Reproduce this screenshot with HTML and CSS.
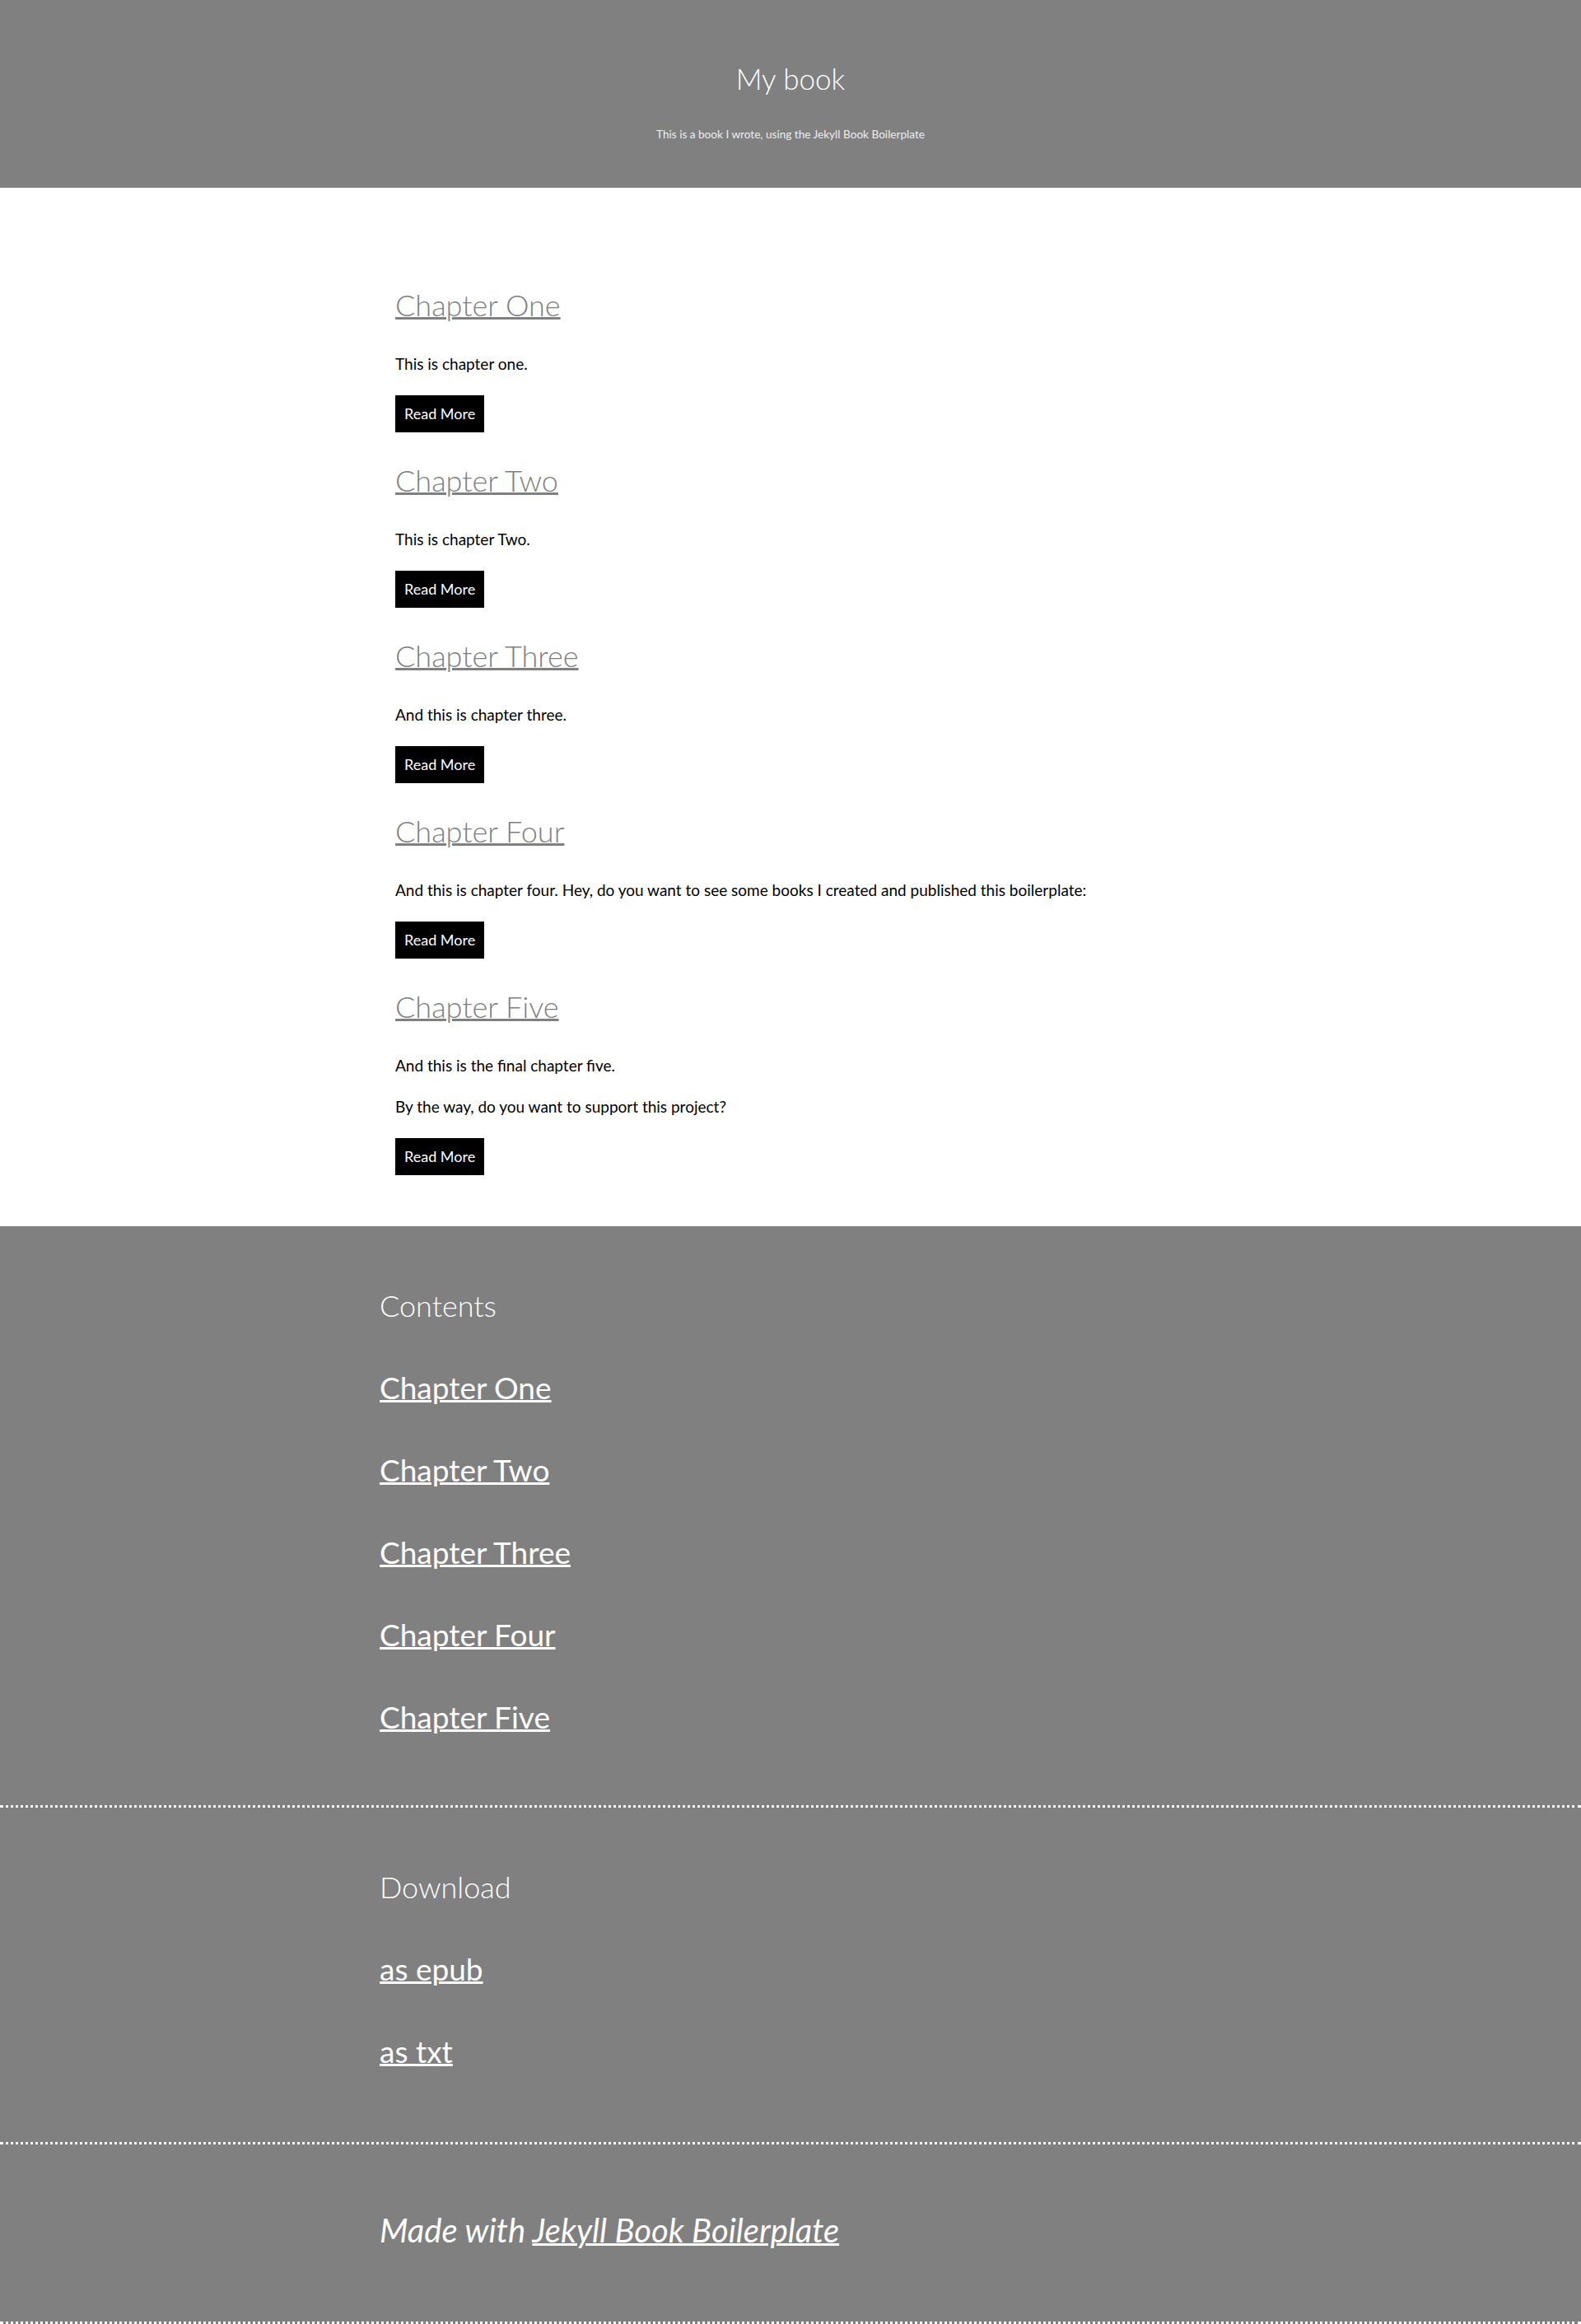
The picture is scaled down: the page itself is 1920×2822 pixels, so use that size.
FILE: index.html
```html
<!DOCTYPE html>
<html lang="en">
<head>
<meta charset="utf-8">
<title>My book</title>
<link rel="stylesheet" href="styles.css">
</head>
<body>
<header class="site-header">
  <h1 class="site-title">My book</h1>
  <p class="site-desc">This is a book I wrote, using the Jekyll Book Boilerplate</p>
</header>

<main class="chapters">
  <article class="chapter">
    <h2 class="chapter-title"><a href="#">Chapter One</a></h2>
    <p class="chapter-text">This is chapter one.</p>
    <a class="btn" href="#">Read More</a>
  </article>
  <article class="chapter">
    <h2 class="chapter-title"><a href="#">Chapter Two</a></h2>
    <p class="chapter-text">This is chapter Two.</p>
    <a class="btn" href="#">Read More</a>
  </article>
  <article class="chapter">
    <h2 class="chapter-title"><a href="#">Chapter Three</a></h2>
    <p class="chapter-text">And this is chapter three.</p>
    <a class="btn" href="#">Read More</a>
  </article>
  <article class="chapter">
    <h2 class="chapter-title"><a href="#">Chapter Four</a></h2>
    <p class="chapter-text">And this is chapter four. Hey, do you want to see some books I created and published this boilerplate:</p>
    <a class="btn" href="#">Read More</a>
  </article>
  <article class="chapter">
    <h2 class="chapter-title"><a href="#">Chapter Five</a></h2>
    <p class="chapter-text">And this is the final chapter five.</p>
    <p class="chapter-text">By the way, do you want to support this project?</p>
    <a class="btn" href="#">Read More</a>
  </article>
</main>

<footer class="site-footer">
  <section class="footer-block footer-contents">
    <div class="footer-inner">
      <h2 class="footer-heading">Contents</h2>
      <ul class="footer-list">
        <li><a href="#">Chapter One</a></li>
        <li><a href="#">Chapter Two</a></li>
        <li><a href="#">Chapter Three</a></li>
        <li><a href="#">Chapter Four</a></li>
        <li><a href="#">Chapter Five</a></li>
      </ul>
    </div>
  </section>
  <section class="footer-block footer-download">
    <div class="footer-inner">
      <h2 class="footer-heading">Download</h2>
      <ul class="footer-list">
        <li><a href="#">as epub</a></li>
        <li><a href="#">as txt</a></li>
      </ul>
    </div>
  </section>
  <section class="footer-block footer-credit">
    <div class="footer-inner">
      <p class="made-with">Made with <a href="#">Jekyll Book Boilerplate</a></p>
    </div>
  </section>
</footer>
</body>
</html>
```
FILE: styles.css
```css
* { box-sizing: border-box; }

html, body {
  margin: 0;
  padding: 0;
}

body {
  font-family: "Lato", "Liberation Sans", sans-serif;
  color: #000;
  background: #fff;
}

/* Header */
.site-header {
  background: #808080;
  color: #fff;
  text-align: center;
  height: 228px;
  padding-top: 74px;
}

.site-title {
  margin: 0;
  font-size: 35px;
  font-weight: 300;
  line-height: 42px;
}

.site-desc {
  margin: 37px 0 0;
  font-size: 13.6px;
  line-height: 20px;
  font-weight: 400;
  color: #eeeeee;
}

/* Chapters */
.chapters {
  width: 960px;
  margin: 0 auto;
  padding: 118px 0 62px;
}

.chapter {
  display: flex;
  flex-direction: column;
  align-items: flex-start;
}

.chapter + .chapter {
  margin-top: 34px;
}

.chapter-title {
  margin: 0;
  font-size: 36px;
  font-weight: 300;
  line-height: 48px;
}

.chapter-title a {
  color: #808080;
  text-decoration: underline;
  text-decoration-thickness: 3px;
  text-underline-offset: 1px;
}

.chapter-text {
  margin: 20px 0 0;
  font-size: 19px;
  line-height: 30px;
}

.chapter-title + .chapter-text {
  margin-top: 33px;
}

.btn {
  margin-top: 23px;
  display: inline-block;
  background: #000;
  color: #fff;
  text-decoration: none;
  font-size: 18px;
  line-height: 27px;
  padding: 9px 11px;
}

/* Footer */
.site-footer {
  background: #808080;
  color: #fff;
}

.footer-block {
  border-bottom: 3px dotted #fff;
}

.footer-inner {
  width: 998px;
  margin: 0 auto;
}

.footer-contents .footer-inner {
  padding: 72px 0 83px;
}

.footer-download .footer-inner {
  padding: 72px 0 86px;
}

.footer-credit .footer-inner {
  padding: 80px 0 87px;
}

.footer-heading {
  margin: 0;
  font-size: 36px;
  font-weight: 300;
  line-height: 48px;
}

.footer-list {
  list-style: none;
  margin: 0;
  padding: 0;
}

.footer-list li {
  margin-top: 52px;
  font-size: 37px;
  line-height: 48px;
}

.footer-list a,
.made-with a {
  color: #fff;
  text-decoration: underline;
  text-decoration-thickness: 3px;
  text-underline-offset: 1px;
}

.made-with {
  margin: 0;
  font-size: 40px;
  line-height: 48px;
  font-style: italic;
}
```
